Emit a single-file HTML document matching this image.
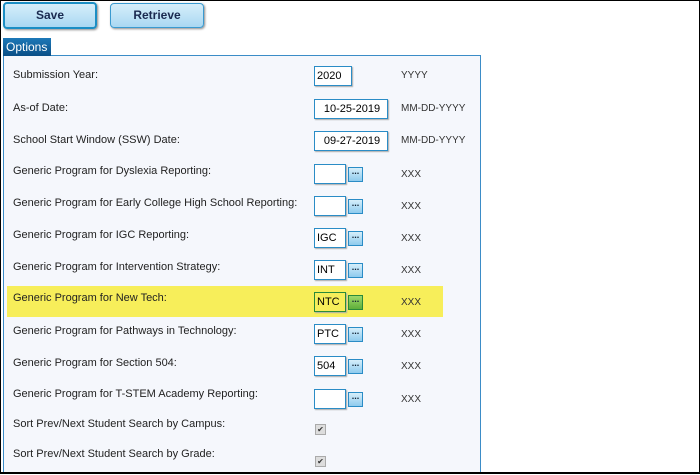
<!DOCTYPE html>
<html style="width:700px;height:475px;overflow:hidden"><head><style>
body{margin:0;width:700px;height:475px;position:relative;background:#fff;font-family:"Liberation Sans",sans-serif;overflow:hidden}
.frame{position:absolute;left:0;top:0;width:698px;height:471px;border:1px solid #000;border-bottom:2px solid #000;z-index:5;pointer-events:none}
.btn{position:absolute;top:3px;height:23px;border:1px solid #3a9ad0;border-radius:4px;background:linear-gradient(#d6eefa,#a9d8f2);font-weight:bold;font-size:12px;color:#1a2a50;text-align:center;line-height:23px;box-shadow:1px 1px 2px #888}
.tab{position:absolute;left:3px;top:38px;width:48px;height:18px;background:linear-gradient(#1c78b8,#0b4f86);color:#fff;font-size:12px;line-height:19px;padding-left:3px;box-sizing:border-box}
.panel{position:absolute;left:3px;top:55px;width:476px;height:430px;border:1px solid #3b8cc7;background:#f5f7fc}
.lbl{position:absolute;left:13px;font-size:11px;color:#222}
.in{position:absolute;left:314px;height:18px;border:1px solid #2a8cc6;background:#fff;font-size:11px;line-height:18px;padding-left:2px;box-sizing:content-box;box-shadow:1px 1px 1px #aaa}
.el{position:absolute;left:348px;width:13px;height:13px;border:1px solid #2a8cc6;background:linear-gradient(#d6eefa,#8fcbee);font-size:9px;line-height:7px;text-align:center;color:#123;font-weight:bold}
.fmt{position:absolute;left:401px;font-size:10px;color:#333}
.cb{position:absolute;left:315px;width:9px;height:9px;background:#ddd;border:1px solid #aaa;font-size:8px;line-height:9px;text-align:center;color:#333}
.hl{position:absolute;left:7px;top:286px;width:436px;height:31px;background:#f7ee5a}
.clip{position:absolute;left:0;top:0;width:700px;height:473px;overflow:hidden}
</style></head><body>
<div class="clip">
<div class="btn" style="left:3px;width:90px;border:2px solid #1b8ec4;top:2px">Save</div>
<div class="btn" style="left:110px;width:92px">Retrieve</div>
<div class="panel"></div>
<div class="tab">Options</div>
<div class="hl"></div>
<div class="lbl" style="top:69px">Submission Year:</div>
<div class="in" style="top:66px;width:34px">2020</div><div class="fmt" style="top:70px">YYYY</div>
<div class="lbl" style="top:102px">As-of Date:</div>
<div class="in" style="top:99px;width:70px;text-align:center">10-25-2019</div><div class="fmt" style="top:103px">MM-DD-YYYY</div>
<div class="lbl" style="top:134px">School Start Window (SSW) Date:</div>
<div class="in" style="top:131px;width:70px;text-align:center">09-27-2019</div><div class="fmt" style="top:135px">MM-DD-YYYY</div>

<div class="lbl" style="top:165px">Generic Program for Dyslexia Reporting:</div>
<div class="in" style="top:164px;width:28px"></div><div class="el" style="top:167px">...</div><div class="fmt" style="top:169px">XXX</div>
<div class="lbl" style="top:197px">Generic Program for Early College High School Reporting:</div>
<div class="in" style="top:196px;width:28px"></div><div class="el" style="top:199px">...</div><div class="fmt" style="top:201px">XXX</div>
<div class="lbl" style="top:229px">Generic Program for IGC Reporting:</div>
<div class="in" style="top:228px;width:28px">IGC</div><div class="el" style="top:231px">...</div><div class="fmt" style="top:233px">XXX</div>
<div class="lbl" style="top:261px">Generic Program for Intervention Strategy:</div>
<div class="in" style="top:260px;width:28px">INT</div><div class="el" style="top:263px">...</div><div class="fmt" style="top:265px">XXX</div>
<div class="lbl" style="top:292px">Generic Program for New Tech:</div>
<div class="in" style="top:292px;width:28px;background:#f7ee5a;border-color:#2a8a3a">NTC</div><div class="el" style="top:295px;background:linear-gradient(#9ed86a,#5fae3a);border-color:#2a8a3a">...</div><div class="fmt" style="top:297px">XXX</div>
<div class="lbl" style="top:325px">Generic Program for Pathways in Technology:</div>
<div class="in" style="top:324px;width:28px">PTC</div><div class="el" style="top:327px">...</div><div class="fmt" style="top:329px">XXX</div>
<div class="lbl" style="top:357px">Generic Program for Section 504:</div>
<div class="in" style="top:356px;width:28px">504</div><div class="el" style="top:359px">...</div><div class="fmt" style="top:361px">XXX</div>
<div class="lbl" style="top:388px">Generic Program for T-STEM Academy Reporting:</div>
<div class="in" style="top:389px;width:28px"></div><div class="el" style="top:392px">...</div><div class="fmt" style="top:394px">XXX</div>
<div class="lbl" style="top:418px">Sort Prev/Next Student Search by Campus:</div>
<div class="cb" style="top:424px">✔</div>
<div class="lbl" style="top:448px">Sort Prev/Next Student Search by Grade:</div>
<div class="cb" style="top:456px">✔</div>
</div>
<div class="frame"></div>
</body></html>
